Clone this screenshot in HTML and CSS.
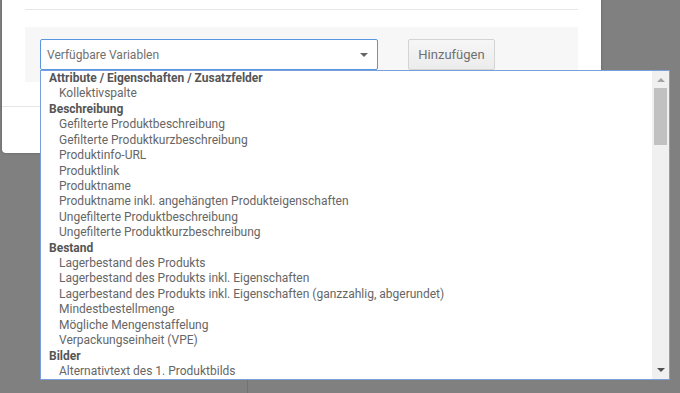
FILE: index.html
```html
<!DOCTYPE html>
<html lang="de">
<head>
<meta charset="utf-8">
<link rel="stylesheet" href="styles.css">
</head>
<body>
<div class="page-line"></div>
<div class="modal">
  <div class="modal-body">
    <div class="sep"></div>
    <div class="panel">
      <div class="select">
        <span class="select-text">Verfügbare Variablen</span>
        <span class="caret"></span>
      </div>
      <button class="btn">Hinzufügen</button>
    </div>
  </div>
  <div class="modal-footer"></div>
</div>

<div class="listbox">
  <div class="options">
    <div class="grp">Attribute / Eigenschaften / Zusatzfelder</div>
    <div class="opt">Kollektivspalte</div>
    <div class="grp">Beschreibung</div>
    <div class="opt">Gefilterte Produktbeschreibung</div>
    <div class="opt">Gefilterte Produktkurzbeschreibung</div>
    <div class="opt">Produktinfo-URL</div>
    <div class="opt">Produktlink</div>
    <div class="opt">Produktname</div>
    <div class="opt">Produktname inkl. angehängten Produkteigenschaften</div>
    <div class="opt">Ungefilterte Produktbeschreibung</div>
    <div class="opt">Ungefilterte Produktkurzbeschreibung</div>
    <div class="grp">Bestand</div>
    <div class="opt">Lagerbestand des Produkts</div>
    <div class="opt">Lagerbestand des Produkts inkl. Eigenschaften</div>
    <div class="opt">Lagerbestand des Produkts inkl. Eigenschaften (ganzzahlig, abgerundet)</div>
    <div class="opt">Mindestbestellmenge</div>
    <div class="opt">Mögliche Mengenstaffelung</div>
    <div class="opt">Verpackungseinheit (VPE)</div>
    <div class="grp">Bilder</div>
    <div class="opt">Alternativtext des 1. Produktbilds</div>
  </div>
  <div class="scrollbar">
    <span class="arrow-up"></span>
    <span class="thumb"></span>
    <span class="spacer"></span>
    <span class="arrow-down"></span>
  </div>
</div>
</body>
</html>
```
FILE: styles.css
```css
html, body {
  margin: 0;
  padding: 0;
}
body {
  width: 680px;
  height: 393px;
  overflow: hidden;
  background: #808080;
  font-family: Roboto, "Liberation Sans", Arial, sans-serif;
  position: relative;
}
.page-line {
  position: absolute;
  left: 247px;
  top: 378px;
  width: 1px;
  height: 15px;
  background: #737373;
}
.modal {
  margin-left: 2px;
  width: 599px;
  height: 153px;
  background: #fff;
  border-radius: 0 0 4px 4px;
  box-shadow: 0 0 3px rgba(0,0,0,0.25);
  display: flex;
  flex-direction: column;
}
.modal-body {
  padding: 9px 23px 0 23px;
  height: 106px;
  box-sizing: border-box;
}
.sep {
  height: 1px;
  background: #e6e6e6;
}
.panel {
  margin-top: 17px;
  height: 55px;
  background: #f7f7f7;
  padding: 12px 0 0 15px;
  box-sizing: border-box;
  display: flex;
  align-items: flex-start;
  gap: 30px;
}
.select {
  width: 338px;
  height: 31px;
  box-sizing: border-box;
  border: 1px solid #5897e0;
  border-radius: 2px;
  background: #fff;
  display: flex;
  align-items: center;
  padding: 0 9px 0 6px;
  justify-content: space-between;
}
.select-text {
  font-size: 12px;
  color: #707070;
}
.caret {
  width: 0;
  height: 0;
  border-left: 4px solid transparent;
  border-right: 4px solid transparent;
  border-top: 4px solid #666;
  margin-top: 1px;
}
.btn {
  width: 87px;
  height: 31px;
  border: 1px solid #d4d4d4;
  border-radius: 2px;
  background: linear-gradient(#f6f6f6, #ececec);
  font-family: inherit;
  font-size: 13px;
  color: #707070;
  padding: 0;
}
.modal-footer {
  border-top: 1px solid #e6e6e6;
  flex: 1;
}
.listbox {
  position: absolute;
  left: 40px;
  top: 70px;
  width: 630px;
  height: 310px;
  box-sizing: border-box;
  border: 1px solid #7b9fdc;
  background: #fff;
  display: flex;
  overflow: hidden;
}
.options {
  flex: 1;
  font-size: 12px;
  line-height: 15.42px;
  color: #666;
  white-space: nowrap;
  overflow: hidden;
}
.grp {
  font-weight: bold;
  color: #555;
  padding-left: 8px;
}
.opt {
  padding-left: 18px;
}
.scrollbar {
  width: 17px;
  background: #f0f0f0;
  display: flex;
  flex-direction: column;
  align-items: center;
}
.arrow-up {
  margin-top: 7px;
  width: 0;
  height: 0;
  border-left: 4px solid transparent;
  border-right: 4px solid transparent;
  border-bottom: 4px solid #a3a3a3;
}
.thumb {
  margin-top: 6px;
  width: 13px;
  height: 57px;
  background: #c1c1c1;
}
.spacer {
  flex: 1;
}
.arrow-down {
  margin-bottom: 7px;
  width: 0;
  height: 0;
  border-left: 4px solid transparent;
  border-right: 4px solid transparent;
  border-top: 4px solid #505050;
}
```
